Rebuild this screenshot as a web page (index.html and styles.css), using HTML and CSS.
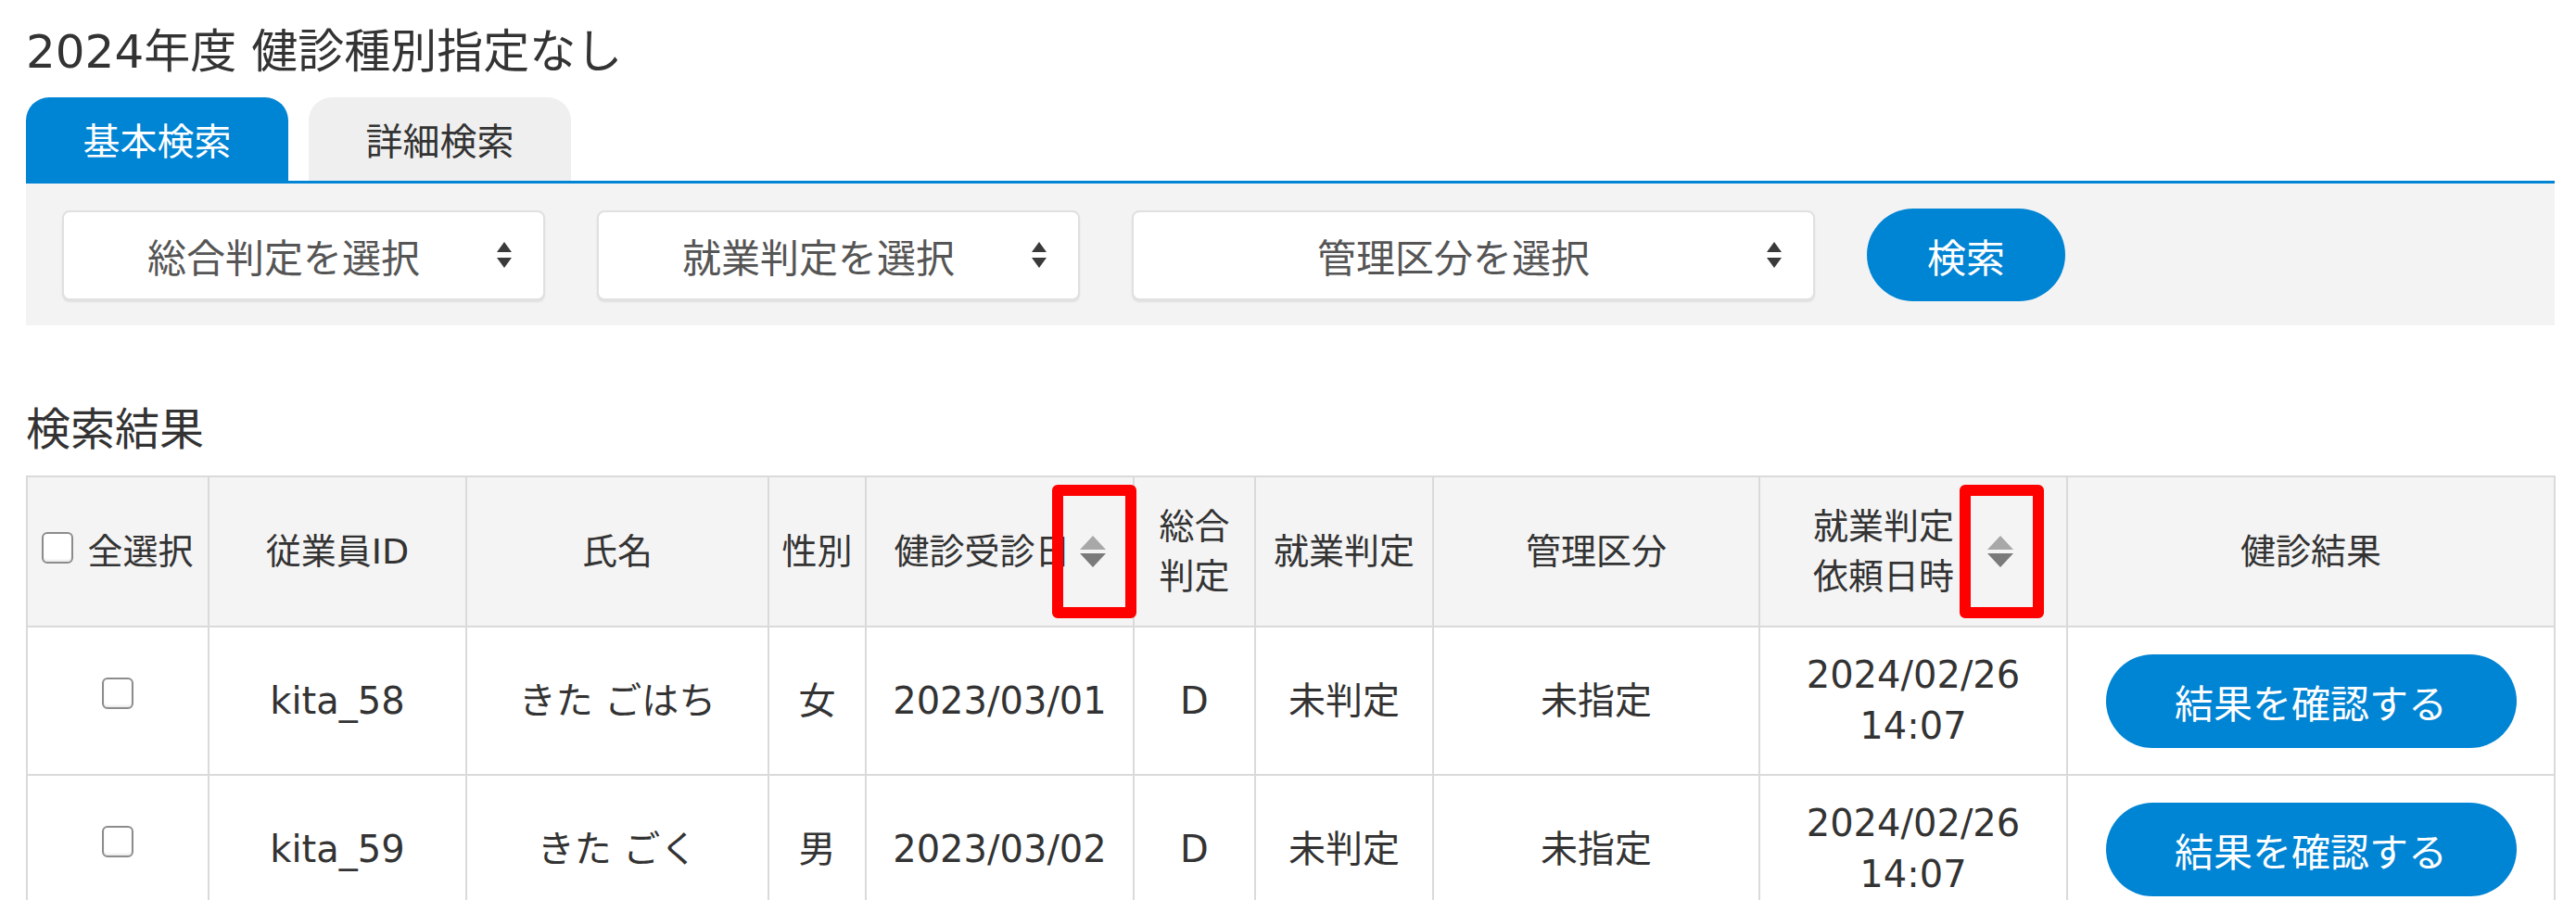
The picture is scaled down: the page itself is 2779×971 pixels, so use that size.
FILE: index.html
```html
<!DOCTYPE html>
<html lang="ja">
<head>
  <meta charset="UTF-8" />
  <meta name="viewport" content="width=device-width, initial-scale=1.0"/>
  <title>健診結果検索</title>
  <link rel="stylesheet" href="styles.css">
</head>
<body>
  <main class="page">

    <h1 class="page-title">2024年度 健診種別指定なし</h1>

    <!-- Tabs -->
    <div class="tabs">
      <button class="tab active">基本検索</button>
      <button class="tab">詳細検索</button>
    </div>

    <!-- Search panel -->
    <div class="search-panel">
      <div class="select">
        <span class="select-text">総合判定を選択</span>
        <svg class="select-arrow" viewBox="0 0 16 28"><polygon points="8,0 16,11 0,11"/><polygon points="0,17 16,17 8,28"/></svg>
      </div>
      <div class="select">
        <span class="select-text">就業判定を選択</span>
        <svg class="select-arrow" viewBox="0 0 16 28"><polygon points="8,0 16,11 0,11"/><polygon points="0,17 16,17 8,28"/></svg>
      </div>
      <div class="select select-wide">
        <span class="select-text">管理区分を選択</span>
        <svg class="select-arrow" viewBox="0 0 16 28"><polygon points="8,0 16,11 0,11"/><polygon points="0,17 16,17 8,28"/></svg>
      </div>
      <button class="btn-search">検索</button>
    </div>

    <h2 class="section-title">検索結果</h2>

    <table class="result-table">
      <colgroup>
        <col style="width:196px">
        <col style="width:278px">
        <col style="width:326px">
        <col style="width:105px">
        <col style="width:289px">
        <col style="width:131px">
        <col style="width:192px">
        <col style="width:352px">
        <col style="width:332px">
        <col style="width:526px">
      </colgroup>
      <thead>
        <tr>
          <th><label class="check-all"><input type="checkbox" class="check"><span>全選択</span></label></th>
          <th>従業員ID</th>
          <th>氏名</th>
          <th>性別</th>
          <th>
            <span class="th-sort">
              <span>健診受診日</span>
              <span class="sort">
                <svg viewBox="0 0 28 34"><polygon class="up" points="14,0 28,15 0,15"/><polygon class="down" points="0,19 28,19 14,34"/></svg>
                <span class="annot"></span>
              </span>
            </span>
          </th>
          <th>総合<br>判定</th>
          <th>就業判定</th>
          <th>管理区分</th>
          <th>
            <span class="th-sort th-sort-wide">
              <span>就業判定<br>依頼日時</span>
              <span class="sort">
                <svg viewBox="0 0 28 34"><polygon class="up" points="14,0 28,15 0,15"/><polygon class="down" points="0,19 28,19 14,34"/></svg>
                <span class="annot"></span>
              </span>
            </span>
          </th>
          <th>健診結果</th>
        </tr>
      </thead>
      <tbody>
        <tr>
          <td><input type="checkbox" class="check row-check"></td>
          <td>kita_58</td>
          <td>きた ごはち</td>
          <td>女</td>
          <td>2023/03/01</td>
          <td>D</td>
          <td>未判定</td>
          <td>未指定</td>
          <td>2024/02/26<br>14:07</td>
          <td><button class="btn-result">結果を確認する</button></td>
        </tr>
        <tr>
          <td><input type="checkbox" class="check row-check"></td>
          <td>kita_59</td>
          <td>きた ごく</td>
          <td>男</td>
          <td>2023/03/02</td>
          <td>D</td>
          <td>未判定</td>
          <td>未指定</td>
          <td>2024/02/26<br>14:07</td>
          <td><button class="btn-result">結果を確認する</button></td>
        </tr>
      </tbody>
    </table>

  </main>
</body>
</html>
```

FILE: styles.css
```css
body {
  margin: 0;
  font-family: "DejaVu Sans", "Noto Sans CJK JP", sans-serif;
  color: #333;
  background: #fff;
  overflow: hidden;
}

.page {
  padding: 21px 23px 0 28px;
}

.page-title {
  margin: 0;
  font-size: 50px;
  font-weight: normal;
  line-height: 70px;
}

/* Tabs */
.tabs {
  display: flex;
  gap: 22px;
  margin-top: 14px;
  border-bottom: 3px solid #0084d4;
}

.tab {
  width: 283px;
  height: 90px;
  border: none;
  border-radius: 25px 25px 0 0;
  background: #efefef;
  color: #333;
  font-family: inherit;
  font-size: 40px;
  padding: 0;
}

.tab.active {
  background: #0084d4;
  color: #fff;
}

/* Search panel */
.search-panel {
  display: flex;
  align-items: center;
  gap: 56px;
  padding: 27px 39px 26px;
  background: #f3f3f3;
}

.select {
  box-sizing: border-box;
  width: 521px;
  height: 97px;
  display: flex;
  align-items: center;
  gap: 13px;
  padding: 0 34px 0 20px;
  background: #fff;
  border: 2px solid #e0e0e0;
  border-radius: 8px;
  box-shadow: 0 2px 2px rgba(0, 0, 0, 0.08);
}

.select-wide {
  width: 737px;
}

.select-text {
  flex: 1;
  text-align: center;
  font-size: 42px;
  color: #555;
}

.select-arrow {
  width: 16px;
  height: 28px;
  fill: #3a3a3a;
  flex-shrink: 0;
}

.btn-search {
  width: 214px;
  height: 100px;
  border: none;
  border-radius: 50px;
  background: #0084d4;
  color: #fff;
  font-family: inherit;
  font-size: 42px;
  padding: 0;
}

.section-title {
  margin: 79px 0 17px;
  font-size: 48px;
  font-weight: normal;
  line-height: 66px;
}

/* Result table */
.result-table {
  width: 2727px;
  table-layout: fixed;
  border-collapse: collapse;
}

.result-table th,
.result-table td {
  border: 2px solid #dadada;
  text-align: center;
  vertical-align: middle;
  padding: 0 6px;
}

.result-table th {
  height: 160px;
  background: #f4f4f4;
  font-size: 38px;
  font-weight: normal;
  line-height: 54px;
}

.result-table td {
  height: 158px;
  font-size: 40px;
  line-height: 55px;
}

.check {
  appearance: none;
  -webkit-appearance: none;
  box-sizing: border-box;
  width: 34px;
  height: 34px;
  margin: 0;
  border: 2px solid #8c8c8c;
  border-radius: 6px;
  background: #fff;
  box-shadow: inset 0 -2px 2px rgba(0, 0, 0, 0.08);
}

.check-all {
  display: inline-flex;
  align-items: center;
  gap: 15px;
}

.check-all .check {
  margin-bottom: 8px;
}

.row-check {
  display: block;
  margin: 0 auto 16px;
}

.th-sort {
  display: inline-flex;
  align-items: center;
  gap: 10px;
  text-align: left;
}

.th-sort-wide {
  gap: 36px;
}

.sort {
  position: relative;
  display: block;
  width: 28px;
  height: 34px;
}

.sort svg {
  display: block;
  width: 28px;
  height: 34px;
}

.sort .up {
  fill: #a8a8a8;
}

.sort .down {
  fill: #7a7a7a;
}

/* red annotation frame */
.annot {
  position: absolute;
  left: -30px;
  top: -55px;
  width: 91px;
  height: 144px;
  box-sizing: border-box;
  border: 12px solid #ff0000;
  border-radius: 6px;
}

.btn-result {
  width: 443px;
  height: 101px;
  border: none;
  border-radius: 51px;
  background: #0084d4;
  color: #fff;
  font-family: inherit;
  font-size: 42px;
  padding: 0;
}
```
